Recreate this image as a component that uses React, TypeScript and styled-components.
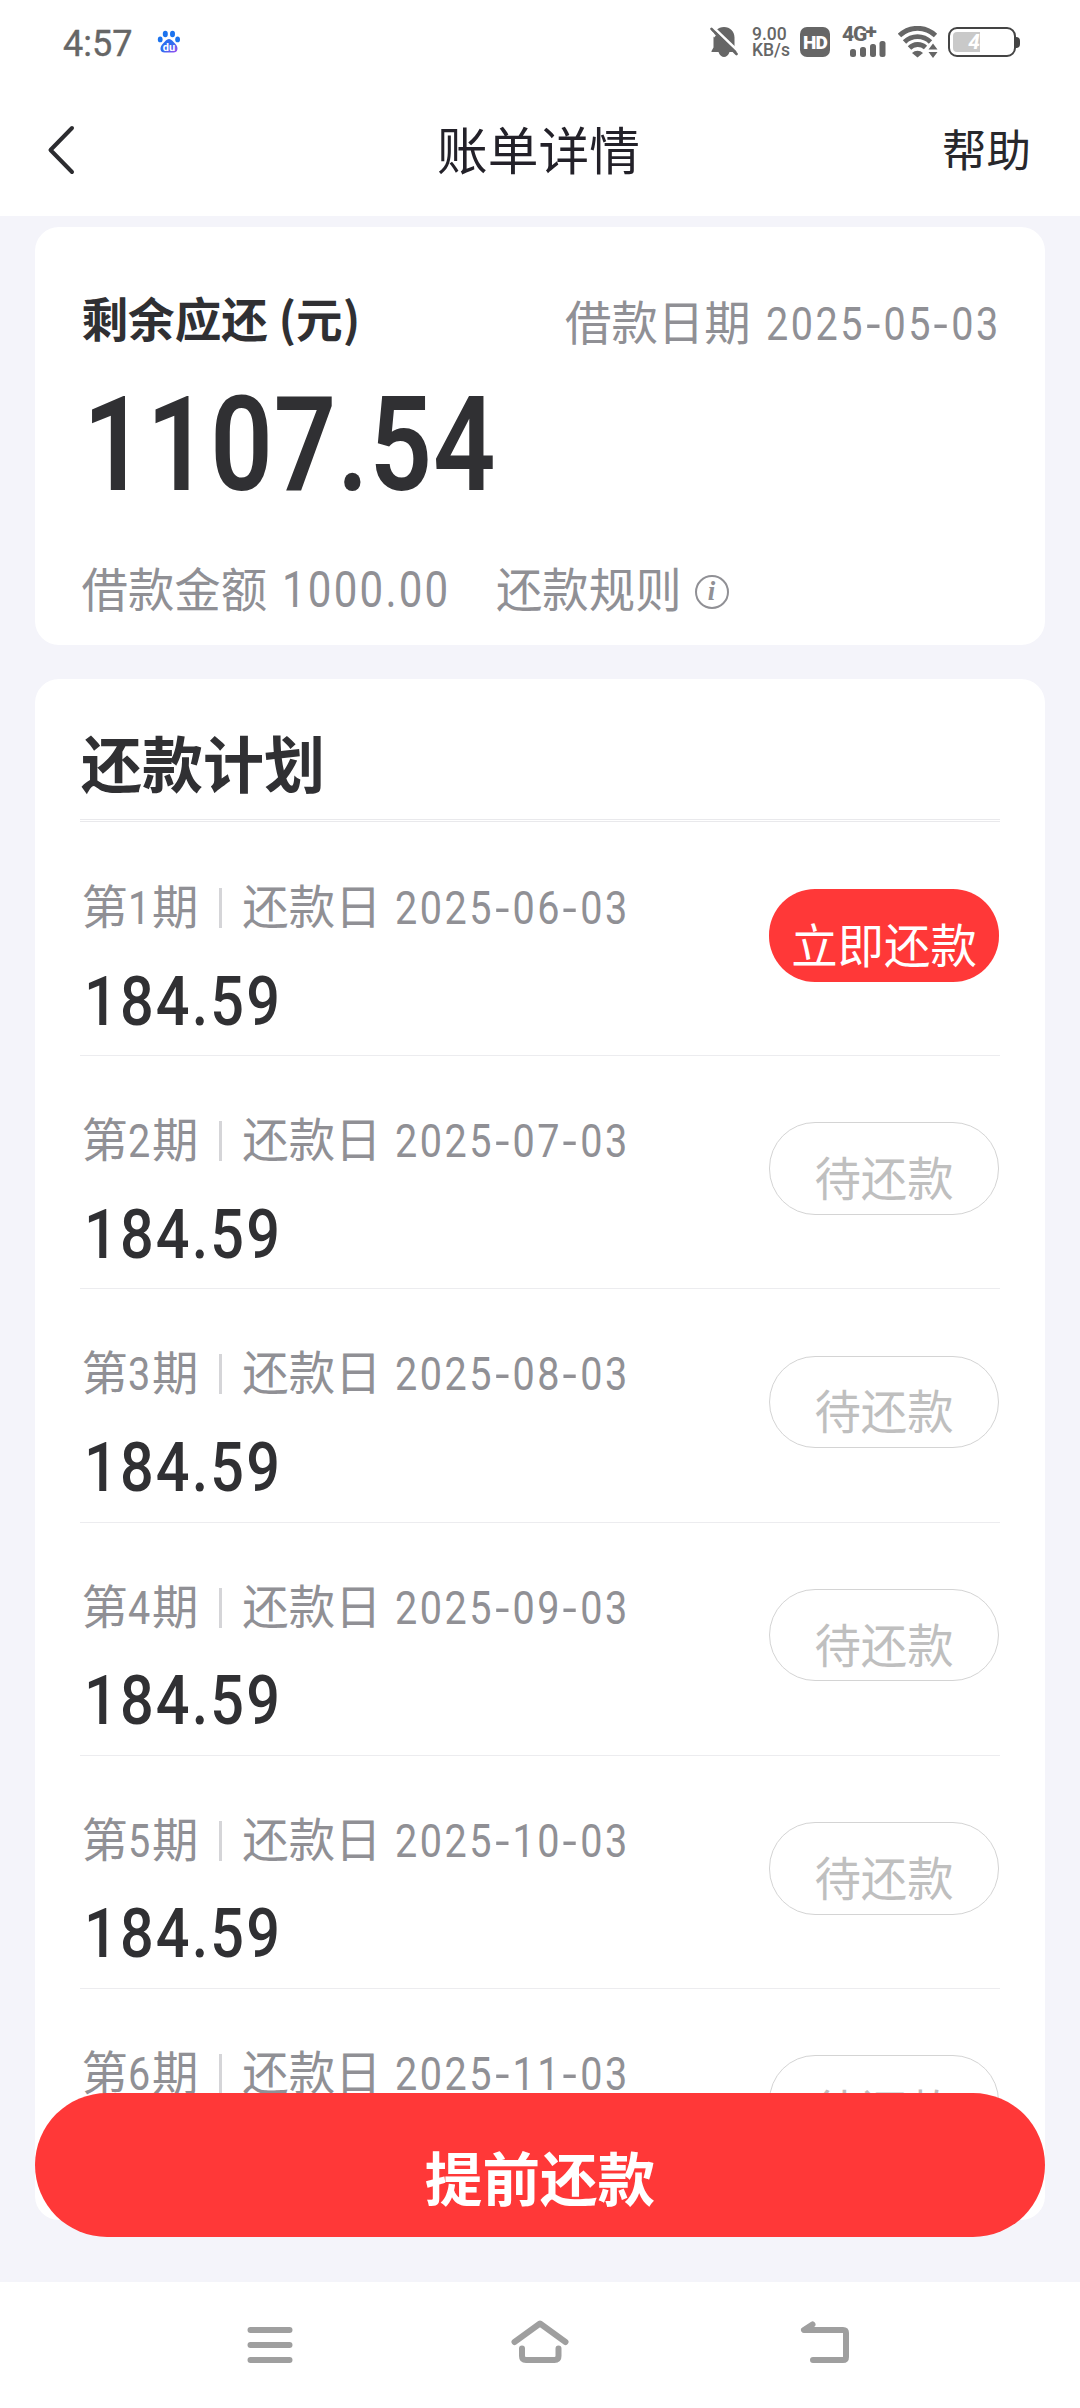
import React from "react";
import styled, { createGlobalStyle } from "styled-components";

const CJK = `"Noto Sans CJK SC", sans-serif`;
const DIGIT = `Roboto, "Noto Sans CJK SC", sans-serif`;

const GlobalStyle = createGlobalStyle`
  *, *::before, *::after { box-sizing: border-box; }
  html, body { margin: 0; padding: 0; background: #fff; }
  body { font-family: ${CJK}; -webkit-font-smoothing: antialiased; }
  button { font: inherit; border: 0; padding: 0; background: none; }
  svg { display: block; flex: none; }
`;

const Screen = styled.div`
  position: relative;
  display: flex;
  flex-direction: column;
  width: 1080px;
  height: 2408px;
  overflow: hidden;
  background: #fff;
`;

const StatusBar = styled.div`
  display: flex;
  align-items: center;
  justify-content: space-between;
  height: 84px;
  padding: 0 60px 0 63px;
  color: #666;
  font-family: ${DIGIT};
`;

const StatusGroup = styled.div`
  display: flex;
  align-items: center;
`;

const Clock = styled.span`
  width: 94px;
  font-size: 36px;
  line-height: 40px;
  padding-top: 3px;
  -webkit-text-stroke: 0.4px #666;
`;

const NetSpeed = styled.div`
  display: flex;
  flex-direction: column;
  width: 35px;
  margin: 0 13px 0 14px;
  font-size: 17.5px;
  font-weight: 500;
  line-height: 16px;
  white-space: nowrap;
`;

const HdBadge = styled.span`
  width: 30px;
  height: 30px;
  margin-right: 12px;
  border-radius: 7px;
  background: #666;
  color: #fff;
  font-size: 19px;
  font-weight: 900;
  line-height: 31px;
  text-align: center;
  letter-spacing: -0.8px;
`;

const Mobile = styled.div`
  display: flex;
  flex-direction: column;
  align-items: flex-end;
  width: 44px;
  height: 30px;
  margin-right: 12px;
`;

const MobileType = styled.span`
  align-self: flex-start;
  font-size: 21px;
  font-weight: 800;
  line-height: 14px;
  letter-spacing: -1px;
  white-space: nowrap;
`;

const Plus = styled.span`
  display: inline-block;
  transform: translate(-1px, -3px);
`;

const Battery = styled.div`
  display: flex;
  align-items: center;
  margin-left: 10px;
`;

const BatteryBody = styled.div`
  width: 68px;
  height: 30px;
  padding: 3px;
  border: 2px solid #444;
  border-radius: 9px;
`;

const BatteryLevel = styled.div`
  width: 27px;
  height: 20px;
  border-radius: 4px 0 0 4px;
  background: #c9c9c9;
  color: #fff;
  font-size: 21px;
  font-style: italic;
  font-weight: 700;
  line-height: 21px;
  text-align: right;
`;

const BatteryTip = styled.div`
  width: 4px;
  height: 11px;
  border-radius: 0 4px 4px 0;
  background: #444;
`;

const Header = styled.header`
  display: grid;
  grid-template-columns: 1fr auto 1fr;
  align-items: center;
  height: 132px;
  padding: 0 49px 0 46px;
  color: #28282c;
`;

const Title = styled.h1`
  margin: -5px 0 0;
  font-size: 50.7px;
  font-weight: 400;
  line-height: 72px;
  color: #232129;
`;

const Help = styled.span`
  justify-self: end;
  margin-top: -4px;
  font-size: 44.5px;
  line-height: 64px;
`;

const Content = styled.main`
  display: flex;
  flex-direction: column;
  gap: 34px;
  height: 2066px;
  padding: 11px 35px 0;
  background: #f4f4fa;
`;

const Card = styled.section<{ $h: number }>`
  height: ${(p) => p.$h}px;
  padding: 0 45px;
  border-radius: 24px;
  background: #fff;
  overflow: hidden;
`;

const Line = styled.div<{ $top: number; $between?: boolean }>`
  display: flex;
  align-items: baseline;
  justify-content: ${(p) => (p.$between ? "space-between" : "flex-start")};
  height: 64px;
  margin-top: ${(p) => p.$top}px;
  padding-left: 1.5px;
  line-height: 64px;
  font-size: 46.4px;
  color: #909095;
  white-space: nowrap;
`;

const Strong = styled.span`
  align-self: flex-start;
  margin-top: -3px;
  font-size: 46.6px;
  font-weight: 700;
  color: #303033;
`;

const Digits = styled.span<{
  $size: number;
  $w: number;
  $scale: number;
  $gap?: number;
  $weight?: number;
  $left?: number;
}>`
  display: inline-block;
  width: ${(p) => p.$w}px;
  margin-left: ${(p) => p.$left ?? 0}px;
  font-family: ${DIGIT};
  font-size: ${(p) => p.$size}px;
  font-weight: ${(p) => p.$weight ?? 400};
  letter-spacing: ${(p) => p.$gap ?? 0}px;
  line-height: 1;
  white-space: nowrap;
  transform: scaleX(${(p) => p.$scale});
  transform-origin: left;
`;

const Dash = styled.span`
  display: inline-block;
  margin: 0 2.3px 0 3.3px;
  transform: scaleX(1.3);
`;

const Total = styled.div`
  height: 140px;
  margin-top: 27px;
  padding-left: 3px;
  line-height: 140px;
  color: #303033;
`;

const InfoIcon = styled.span`
  align-self: flex-start;
  width: 34px;
  height: 34px;
  margin: 20px 0 0 13px;
  border: 2px solid #909095;
  border-radius: 50%;
  font: italic 700 27px/29px "Liberation Serif", serif;
  text-align: center;
`;

const PlanTitle = styled.h2`
  height: 141px;
  margin: 0 0 1px;
  padding: 38.5px 0 0 1px;
  border-bottom: 1px solid #e9e9ec;
  font-size: 61px;
  font-weight: 700;
  line-height: 88px;
  color: #303033;
`;

const PlanList = styled.ul`
  margin: 0;
  padding: 1px 0 0;
  list-style: none;
  border-top: 1px solid #e9e9ec;
`;

const PlanRow = styled.li`
  display: flex;
  justify-content: space-between;
  height: 233.2px;
  border-bottom: 1px solid #ececef;
`;

const Bar = styled.span`
  align-self: flex-start;
  width: 3px;
  height: 40px;
  margin: 16px 20px 0 21px;
  background: #d5d5d8;
`;

const Amount = styled.div`
  height: 80px;
  margin-top: 30.5px;
  padding-left: 3.5px;
  line-height: 80px;
  color: #303033;
`;

const Pill = styled.button<{ $active: boolean }>`
  width: 230px;
  height: 92.5px;
  margin: 66.3px 1px 0 0;
  padding-top: 15px;
  border-radius: 46px;
  border: ${(p) => (p.$active ? "0" : "1px solid #d4d4d4")};
  background: ${(p) => (p.$active ? "#ff3838" : "#fff")};
  color: ${(p) => (p.$active ? "#fff" : "#bfbfbf")};
  font-size: 46.4px;
  line-height: 64px;
`;

const PrepayButton = styled.button`
  position: absolute;
  left: 35px;
  right: 35px;
  bottom: 171px;
  height: 144px;
  padding-top: 22px;
  border-radius: 72px;
  background: #ff3838;
  color: #fff;
  font-size: 57.6px;
  font-weight: 700;
  line-height: 80px;
`;

const NavBar = styled.nav`
  display: grid;
  grid-template-columns: repeat(3, 270px);
  justify-content: center;
  justify-items: center;
  padding-top: 33px;
  height: 126px;
`;

const DateText = ({ value, left }: { value: string; left: number }) => {
  const [y, m, d] = value.split("-");
  return (
    <Digits $size={46} $w={234} $scale={0.86} $gap={2.95} $left={left}>
      {y}<Dash>-</Dash>{m}<Dash>-</Dash>{d}
    </Digits>
  );
};

const plan = ["2025-06-03", "2025-07-03", "2025-08-03", "2025-09-03", "2025-10-03", "2025-11-03"];

const Paw = () => (
  <svg width="24" height="24" viewBox="0 0 24 24">
    <defs>
      <linearGradient id="paw" x1="0" y1="0" x2="1" y2="1">
        <stop offset=".5" stopColor="#2f6df0" />
        <stop offset="1" stopColor="#a04cf0" />
      </linearGradient>
    </defs>
    <g fill="#1c73ee">
      <ellipse cx="8.3" cy="4" rx="2.5" ry="3.2" />
      <ellipse cx="15.5" cy="4" rx="2.5" ry="3.2" />
      <ellipse cx="3.2" cy="9.4" rx="2.4" ry="2.9" />
      <ellipse cx="20.6" cy="9.4" rx="2.4" ry="2.9" />
    </g>
    <path d="M12 9c2.5 0 4 2.5 6 4.5 4 4 3 9-1.5 9h-9C3 22.5 2 17.5 6 13.5 8 11.5 9.5 9 12 9z" fill="url(#paw)" />
    <text x="12" y="20.5" fontSize="11" fontWeight="700" fill="#fff" textAnchor="middle" fontFamily="Roboto">du</text>
  </svg>
);

const MutedBell = () => (
  <svg width="28" height="32" viewBox="0 0 28 32">
    <path d="M14 1c6 0 10.5 4.5 10.5 10.5V21l2 4v1H1.5v-1l2-3.5V11.5C3.5 5.500 8 1 14 1zM8.5 26h11c-1 3.5-3.5 5-5.5 5s-4.500-1.500-5.500-5z" fill="#666" />
    <path d="M2 0L30 27" stroke="#fff" strokeWidth="2.5" />
    <path d="M1.5 3L26.5 28" stroke="#666" strokeWidth="2.6" strokeLinecap="round" />
    <path d="M-1 4L1.5 7L5 10.5" stroke="#fff" strokeWidth="2.5" fill="none" />
  </svg>
);

const SignalBars = () => (
  <svg width="36" height="16" viewBox="0 0 36 16" fill="#666">
    <rect x="0" y="8" width="6" height="8" rx="2.5" />
    <rect x="10" y="6" width="6" height="10" rx="2.5" />
    <rect x="20" y="3" width="6" height="13" rx="2.5" />
    <rect x="29.5" y="0" width="6" height="16" rx="2.5" />
  </svg>
);

const Wifi = () => (
  <svg width="40" height="32" viewBox="0 0 40 32">
    <g fill="none" stroke="#666" strokeWidth="4.8">
      <path d="M1.5 9.5a26 26 0 0 1 36 0" />
      <path d="M6.5 16a18.5 18.5 0 0 1 26 0" />
      <path d="M11.5 22a11.5 11.5 0 0 1 16-.5" />
    </g>
    <path d="M14 27a8 8 0 0 1 11 0l-5.5 4.5z" fill="#666" />
    <path d="M29 24.5l6-9 6 9v2l-6 7-6-7z" fill="#fff" />
    <path d="M30.5 23.5l4.5-6 4.5 6zM30.5 26l4.500 6 4.500-6z" fill="#666" />
  </svg>
);

export default function App() {
  return (
    <Screen>
      <GlobalStyle />
      <StatusBar>
        <StatusGroup>
          <Clock>4:57</Clock>
          <Paw />
        </StatusGroup>
        <StatusGroup>
          <MutedBell />
          <NetSpeed><span>9.00</span><span>KB/s</span></NetSpeed>
          <HdBadge>HD</HdBadge>
          <Mobile>
            <MobileType>4G<Plus>+</Plus></MobileType>
            <SignalBars />
          </Mobile>
          <Wifi />
          <Battery>
            <BatteryBody><BatteryLevel>4</BatteryLevel></BatteryBody>
            <BatteryTip />
          </Battery>
        </StatusGroup>
      </StatusBar>

      <Header>
        <svg width="30" height="50" viewBox="0 0 30 50" fill="none" stroke="#2c2c30" strokeWidth="4" strokeLinecap="round" strokeLinejoin="round">
          <path d="M26 3L4.5 25L26 47" />
        </svg>
        <Title>账单详情</Title>
        <Help>帮助</Help>
      </Header>

      <Content>
        <Card $h={418}>
          <Line $top={61} $between>
            <Strong>剩余应还 (元)</Strong>
            <span>借款日期&nbsp;<DateText value="2025-05-03" left={5} /></span>
          </Line>
          <Total>
            <Digits $size={132} $w={400} $scale={0.83} $weight={600} $gap={1.2}>1107.54</Digits>
          </Total>
          <Line $top={36}>
            <span>借款金额&nbsp;</span>
            <Digits $size={49.5} $w={213.5} $scale={0.85} $gap={2.6} $left={5}>1000.00</Digits>
            <span>还款规则</span>
            <InfoIcon>i</InfoIcon>
          </Line>
        </Card>

        <Card $h={1541}>
          <PlanTitle>还款计划</PlanTitle>
          <PlanList>
            {plan.map((date, i) => (
              <PlanRow key={date}>
                <div>
                  <Line $top={49}>
                    <span>第</span>
                    <Digits $size={46} $w={24} $scale={0.86}>{i + 1}</Digits>
                    <span>期</span>
                    <Bar />
                    <span>还款日&nbsp;</span>
                    <DateText value={date} left={3} />
                  </Line>
                  <Amount>
                    <Digits $size={69} $w={200} $scale={0.86} $weight={500} $gap={2.5}>184.59</Digits>
                  </Amount>
                </div>
                <Pill $active={i === 0}>{i === 0 ? "立即还款" : "待还款"}</Pill>
              </PlanRow>
            ))}
          </PlanList>
        </Card>
      </Content>

      <PrepayButton>提前还款</PrepayButton>

      <NavBar>
        <svg width="60" height="60" viewBox="0 0 60 60" stroke="#9f9f9f" strokeWidth="6" strokeLinecap="round">
          <path d="M10.5 15h39M10.5 30h39M10.5 45h39" />
        </svg>
        <svg width="60" height="60" viewBox="0 0 60 60" fill="none" stroke="#9f9f9f" strokeWidth="6" strokeLinecap="round" strokeLinejoin="round">
          <path d="M4.5 27L30 8.500 55.500 27M12 33.500V41q0 4 4 4h28.500q4 0 4-4v-7.500" />
        </svg>
        <svg width="90" height="60" viewBox="0 0 90 60" fill="none" stroke="#9f9f9f" strokeWidth="6" strokeLinecap="round" strokeLinejoin="round">
          <path d="M47.5 9.500L39 15h39q3 0 3 3v24q0 3-3 3H48" />
        </svg>
      </NavBar>
    </Screen>
  );
}
